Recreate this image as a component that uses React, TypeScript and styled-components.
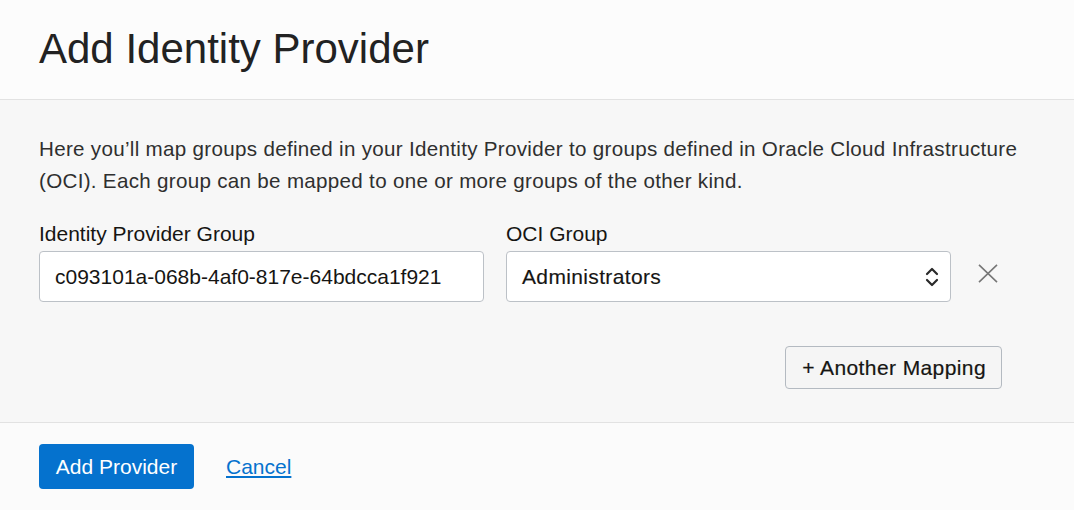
import React from "react";
import styled, { createGlobalStyle } from "styled-components";

const GlobalStyle = createGlobalStyle`
  html, body {
    margin: 0;
    padding: 0;
    background: #fbfbfb;
  }
  body {
    font-family: "Liberation Sans", Arial, Helvetica, sans-serif;
    color: #161513;
    -webkit-font-smoothing: antialiased;
  }
  * { box-sizing: border-box; }
`;

const Page = styled.div`
  width: 1074px;
  height: 510px;
  display: flex;
  flex-direction: column;
  background: #fbfbfb;
`;

const Header = styled.header`
  height: 100px;
  padding: 28px 39px 0;
  background: #fcfcfc;
  border-bottom: 1px solid #e2e2e2;
`;

const Title = styled.h1`
  margin: 0;
  font-size: 42px;
  line-height: 42px;
  font-weight: 400;
  color: #222222;
  letter-spacing: 0;
`;

const Body = styled.main`
  height: 323px;
  padding: 33px 39px 0;
  background: #f7f7f7;
  border-bottom: 1px solid #e2e2e2;
`;

const Intro = styled.p`
  margin: 0;
  max-width: 990px;
  font-size: 20.6px;
  line-height: 31.6px;
  letter-spacing: 0.3px;
  color: #2f2f2f;
`;

const Form = styled.div`
  width: 963px;
  margin-top: 26px;
  display: flex;
  flex-direction: column;
`;

const MappingRow = styled.div`
  display: grid;
  grid-template-columns: 445px 445px auto;
  column-gap: 22px;
  align-items: end;
`;

const Field = styled.label`
  display: flex;
  flex-direction: column;
  gap: 5px;
`;

const Label = styled.span`
  font-size: 21px;
  line-height: 24px;
  color: #161513;
`;

const controlBase = `
  height: 51px;
  width: 100%;
  border: 1px solid #bcc1c7;
  border-radius: 4px;
  background: #ffffff;
  font-family: "Liberation Sans", Arial, Helvetica, sans-serif;
  font-size: 21px;
  color: #161513;
`;

const TextInput = styled.input`
  ${controlBase}
  padding: 0 15px;
  outline: none;
`;

const SelectBox = styled.div`
  ${controlBase}
  display: flex;
  align-items: center;
  justify-content: space-between;
  padding: 0 11px 0 15px;
  letter-spacing: 0.35px;
  -webkit-text-stroke: 0.15px #161513;
`;

const RemoveButton = styled.button`
  width: 29px;
  height: 51px;
  padding: 0 0 0 5px;
  border: none;
  background: transparent;
  display: flex;
  align-items: center;
  cursor: pointer;
  svg { margin-top: -6px; }
`;

const Actions = styled.div<{ $top: number }>`
  display: flex;
  justify-content: flex-end;
  margin-top: ${(p) => p.$top}px;
`;

const SecondaryButton = styled.button`
  height: 43px;
  padding: 0 15px 0 16px;
  border: 1px solid #b4bac1;
  border-radius: 4px;
  background: #f5f5f5;
  font-family: "Liberation Sans", Arial, Helvetica, sans-serif;
  font-size: 21px;
  color: #161513;
  letter-spacing: 0.4px;
  -webkit-text-stroke: 0.2px #161513;
  cursor: pointer;
`;

const Footer = styled.footer`
  flex: 1;
  padding: 21px 39px 0;
  display: flex;
  align-items: flex-start;
  gap: 32px;
  background: #fbfbfb;
`;

const PrimaryButton = styled.button`
  height: 45px;
  width: 155px;
  padding: 0;
  border: none;
  border-radius: 4px;
  background: #0572ce;
  color: #ffffff;
  font-family: "Liberation Sans", Arial, Helvetica, sans-serif;
  font-size: 21px;
  cursor: pointer;
`;

const CancelLink = styled.a`
  height: 45px;
  display: flex;
  align-items: center;
  font-size: 21px;
  color: #0572ce;
  text-decoration: underline;
  text-underline-offset: 2px;
  cursor: pointer;
`;

const ChevronIcon = () => (
  <svg width="14" height="22" viewBox="0 0 14 22" fill="none" aria-hidden="true">
    <path d="M2 8 L7 3 L12 8" stroke="#2a2a2a" strokeWidth="2.2" strokeLinecap="round" strokeLinejoin="round" />
    <path d="M2 14 L7 19 L12 14" stroke="#2a2a2a" strokeWidth="2.2" strokeLinecap="round" strokeLinejoin="round" />
  </svg>
);

const CloseIcon = () => (
  <svg width="20" height="19" viewBox="0 0 20 19" fill="none" aria-hidden="true">
    <path d="M1 0.8 L19 18.2 M19 0.8 L1 18.2" stroke="#777777" strokeWidth="1.6" />
  </svg>
);

export default function App() {
  return (
    <>
      <GlobalStyle />
      <Page>
        <Header>
          <Title>Add Identity Provider</Title>
        </Header>
        <Body>
          <Intro>
            Here you’ll map groups defined in your Identity Provider to groups defined in Oracle Cloud Infrastructure
            (OCI). Each group can be mapped to one or more groups of the other kind.
          </Intro>
          <Form>
            <MappingRow>
              <Field>
                <Label>Identity Provider Group</Label>
                <TextInput defaultValue="c093101a-068b-4af0-817e-64bdcca1f921" />
              </Field>
              <Field as="div">
                <Label>OCI Group</Label>
                <SelectBox role="combobox">
                  <span>Administrators</span>
                  <ChevronIcon />
                </SelectBox>
              </Field>
              <RemoveButton aria-label="Remove mapping">
                <CloseIcon />
              </RemoveButton>
            </MappingRow>
            <Actions $top={44}>
              <SecondaryButton>+ Another Mapping</SecondaryButton>
            </Actions>
          </Form>
        </Body>
        <Footer>
          <PrimaryButton>Add Provider</PrimaryButton>
          <CancelLink>Cancel</CancelLink>
        </Footer>
      </Page>
    </>
  );
}
